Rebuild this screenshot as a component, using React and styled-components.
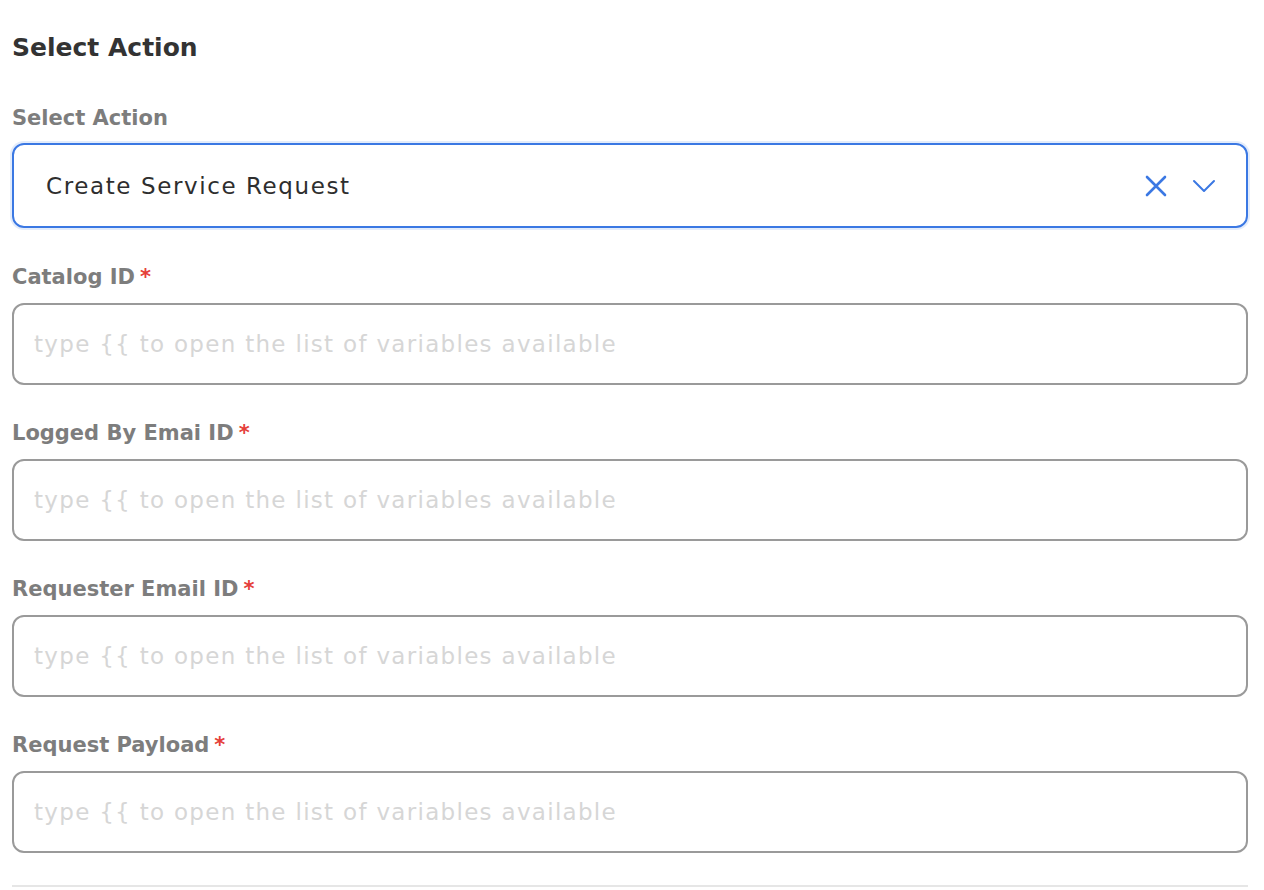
import styled, { createGlobalStyle } from 'styled-components'

const GlobalStyle = createGlobalStyle`
  body {
    margin: 0;
    background: #ffffff;
    font-family: "DejaVu Sans", "Open Sans", sans-serif;
  }
`

const s = {
  Page: styled.div`
    width: 1236px;
    padding: 28px 16px 0 12px;
  `,
  Title: styled.h2`
    margin: 0;
    font-size: 25px;
    line-height: 40px;
    font-weight: 700;
    color: #333333;
  `,
  Field: styled.div`
    display: flex;
    flex-direction: column;
    gap: ${(p) => p.$gap || 12}px;
    margin-top: ${(p) => p.$top || 34}px;
  `,
  Label: styled.label`
    display: flex;
    align-items: center;
    gap: 5px;
    font-size: 21px;
    line-height: 28px;
    font-weight: 600;
    color: #7d7d7d;
  `,
  Star: styled.span`
    color: #e5403a;
    font-size: 21px;
  `,
  Select: styled.div`
    display: flex;
    align-items: center;
    height: 85px;
    box-sizing: border-box;
    padding: 0 30px 0 32px;
    border: 2px solid #3b78e3;
    border-radius: 12px;
    box-shadow: 0 0 0 2px rgba(59, 120, 227, 0.14);
  `,
  Value: styled.span`
    flex: 1;
    font-size: 23px;
    letter-spacing: 1.6px;
    font-weight: 500;
    color: #2e2e2e;
  `,
  IconButton: styled.span`
    display: flex;
    align-items: center;
    justify-content: center;
    margin-left: ${(p) => p.$gap || 0}px;
  `,
  Input: styled.input`
    height: 82px;
    box-sizing: border-box;
    padding: 0 20px;
    border: 2px solid #9a9a9a;
    border-radius: 12px;
    font-family: inherit;
    font-size: 23px;
    letter-spacing: 1.3px;
    color: #333;
    outline: none;
    &::placeholder {
      color: #d6d6d6;
    }
  `,
  Divider: styled.hr`
    margin: 32px 0 0;
    border: none;
    border-top: 2px solid #e6e6e6;
  `,
}

const fields = ['Catalog ID', 'Logged By Emai ID', 'Requester Email ID', 'Request Payload']

const App = () => {
  return (
    <>
      <GlobalStyle />
      <s.Page>
        <s.Title>Select Action</s.Title>
        <s.Field $top={36} $gap={11}>
          <s.Label>Select Action</s.Label>
          <s.Select>
            <s.Value>Create Service Request</s.Value>
            <s.IconButton>
              <svg width="24" height="24" viewBox="0 0 24 24" fill="none" stroke="#3b78e3" strokeWidth="2.6" strokeLinecap="round">
                <path d="M3 3l18 18M21 3L3 21" />
              </svg>
            </s.IconButton>
            <s.IconButton $gap={24}>
              <svg width="24" height="14" viewBox="0 0 24 14" fill="none" stroke="#3b78e3" strokeWidth="2" strokeLinecap="round" strokeLinejoin="round">
                <path d="M2 2l10 10L22 2" />
              </svg>
            </s.IconButton>
          </s.Select>
        </s.Field>
        {fields.map((f, i) => (
          <s.Field key={f} $top={i === 0 ? 35 : 34}>
            <s.Label>
              {f}
              <s.Star>*</s.Star>
            </s.Label>
            <s.Input placeholder="type {{ to open the list of variables available" />
          </s.Field>
        ))}
        <s.Divider />
      </s.Page>
    </>
  )
}

export default App
